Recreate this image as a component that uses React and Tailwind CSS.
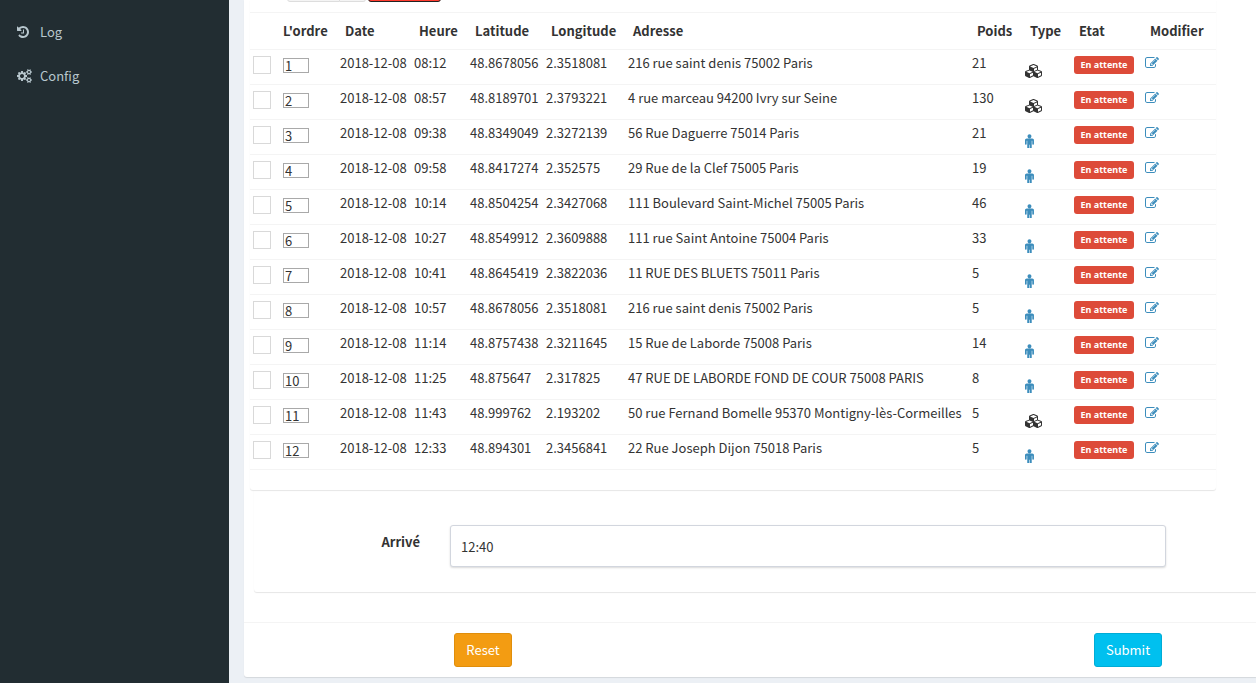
const ICONS = {
  history: {
    box: '128 0 1536 1792',
    d: 'M1664 896q0 156-61 298t-164 245-245 164-298 61q-172 0-327-72.5t-264-204.5q-7-10-6.5-22.5t8.5-20.5l137-138q10-9 25-9 16 2 23 12 73 95 179 147t225 52q104 0 198.5-40.5t163.5-109.5 109.5-163.5 40.5-198.5-40.5-198.5-109.5-163.5-163.5-109.5-198.5-40.5q-98 0-188 35.5t-160 101.5l137 138q31 30 14 69-17 40-59 40h-448q-26 0-45-19t-19-45v-448q0-42 40-59 39-17 69 14l130 129q107-101 244.5-156.5t284.5-55.5q156 0 298 61t245 164 164 245 61 298zm-640-288v448q0 14-9 23t-23 9h-320q-14 0-23-9t-9-23v-64q0-14 9-23t23-9h224v-352q0-14 9-23t23-9h64q14 0 23 9t9 23z',
  },
  cogs: {
    box: '0 0 1920 1792',
    d: 'M896 896q0-106-75-181t-181-75-181 75-75 181 75 181 181 75 181-75 75-181zm768 512q0-52-38-90t-90-38-90 38-38 90q0 53 37.5 90.5t90.5 37.5 90.5-37.5 37.5-90.5zm0-1024q0-52-38-90t-90-38-90 38-38 90q0 53 37.5 90.5t90.5 37.5 90.5-37.5 37.5-90.5zm-384 421v185q0 10-7 19.5t-16 10.5l-155 24q-11 35-32 76 34 48 90 115 7 11 7 20 0 12-7 19-23 30-82.5 89.5t-78.5 59.5q-11 0-21-7l-115-90q-37 19-77 31-11 108-23 155-7 24-30 24h-186q-11 0-20-7.5t-10-17.5l-23-153q-34-10-75-31l-118 89q-7 7-20 7-11 0-21-8-144-133-144-160 0-9 7-19 10-14 41-53t47-61q-23-44-35-82l-152-24q-10-1-17-9.5t-7-19.5v-185q0-10 7-19.5t16-10.5l155-24q11-35 32-76-34-48-90-115-7-11-7-20 0-12 7-20 22-30 82-89t79-59q11 0 21 7l115 90q34-18 77-32 11-108 23-154 7-24 30-24h186q11 0 20 7.5t10 17.5l23 153q34 10 75 31l118-89q8-7 20-7 11 0 21 8 144 133 144 160 0 8-7 19-12 16-42 54t-45 60q23 48 34 82l152 23q10 2 17 10.5t7 19.5zm640 533v140q0 16-149 31-12 27-30 52 51 113 51 138 0 4-4 7-122 71-124 71-8 0-46-47t-52-68q-20 2-30 2t-30-2q-14 21-52 68t-46 47q-2 0-124-71-4-3-4-7 0-25 51-138-18-25-30-52-149-15-149-31v-140q0-16 149-31 13-29 30-52-51-113-51-138 0-4 4-7 4-2 35-20t59-34 30-16q8 0 46 46.5t52 67.5q20-2 30-2t30 2q51-71 92-112l6-2q4 0 124 70 4 3 4 7 0 25-51 138 17 23 30 52 149 15 149 31zm0-1024v140q0 16-149 31-12 27-30 52 51 113 51 138 0 4-4 7-122 71-124 71-8 0-46-47t-52-68q-20 2-30 2t-30-2q-14 21-52 68t-46 47q-2 0-124-71-4-3-4-7 0-25 51-138-18-25-30-52-149-15-149-31v-140q0-16 149-31 13-29 30-52-51-113-51-138 0-4 4-7 4-2 35-20t59-34 30-16q8 0 46 46.5t52 67.5q20-2 30-2t30 2q51-71 92-112l6-2q4 0 124 70 4 3 4 7 0 25-51 138 17 23 30 52 149 15 149 31z',
  },
  cubes: {
    box: '0 0 2304 1792',
    d: 'M640 1632l384-192v-314l-384 164v342zm-64-454l404-173-404-173-404 173zm1088 454l384-192v-314l-384 164v342zm-64-454l404-173-404-173-404 173zm-448-293l384-165v-266l-384 164v267zm-64-379l441-189-441-189-441 189zm1088 518v416q0 36-19 67t-52 47l-448 224q-25 14-57 14t-57-14l-448-224q-4-2-7-4-2 2-7 4l-448 224q-25 14-57 14t-57-14l-448-224q-33-16-52-47t-19-67v-416q0-38 21.5-70t56.5-48l434-186v-400q0-38 21.5-70t56.5-48l448-192q23-10 50-10t50 10l448 192q35 16 56.5 48t21.5 70v400l434 186q36 16 57 48t21 70z',
  },
  male: {
    box: '0 128 1024 1600',
    d: 'M1024 832v416q0 40-28 68t-68 28-68-28-28-68v-352h-64v912q0 46-33 79t-79 33-79-33-33-79v-464h-64v464q0 46-33 79t-79 33-79-33-33-79v-912h-64v352q0 40-28 68t-68 28-68-28-28-68v-416q0-80 56-136t136-56h640q80 0 136 56t56 136zm-288-448q0 93-65.5 158.5t-158.5 65.5-158.5-65.5-65.5-158.5 65.5-158.5 158.5-65.5 158.5 65.5 65.5 158.5z',
  },
  edit: {
    box: '0 0 1792 1792',
    d: 'M888 1184l116-116-152-152-116 116v56h96v96h56zm440-720q-16-16-33 1l-350 350q-17 17-1 33t33-1l350-350q17-17 1-33zm80 594v190q0 119-84.5 203.5t-203.5 84.5h-832q-119 0-203.5-84.5t-84.5-203.5v-832q0-119 84.5-203.5t203.5-84.5h832q63 0 117 25 15 7 18 23 3 17-9 29l-49 49q-14 14-32 8-23-6-45-6h-832q-66 0-113 47t-47 113v832q0 66 47 113t113 47h832q66 0 113-47t47-113v-126q0-13 9-22l64-64q15-15 35-7t20 29zm-96-738l288 288-672 672h-288v-288zm444 132l-92 92-288-288 92-92q28-28 68-28t68 28l152 152q28 28 28 68t-28 68z',
  },
};

function Icon({ name, className }) {
  return (
    <svg viewBox={ICONS[name].box} preserveAspectRatio="xMinYMid meet" fill="currentColor" aria-hidden="true" className={className}>
      <path d={ICONS[name].d} />
    </svg>
  );
}

const STOPS = [
  ['08:12', '48.8678056', '2.3518081', '216 rue saint denis 75002 Paris', 21, 'cubes'],
  ['08:57', '48.8189701', '2.3793221', '4 rue marceau 94200 Ivry sur Seine', 130, 'cubes'],
  ['09:38', '48.8349049', '2.3272139', '56 Rue Daguerre 75014 Paris', 21, 'male'],
  ['09:58', '48.8417274', '2.352575', '29 Rue de la Clef 75005 Paris', 19, 'male'],
  ['10:14', '48.8504254', '2.3427068', '111 Boulevard Saint-Michel 75005 Paris', 46, 'male'],
  ['10:27', '48.8549912', '2.3609888', '111 rue Saint Antoine 75004 Paris', 33, 'male'],
  ['10:41', '48.8645419', '2.3822036', '11 RUE DES BLUETS 75011 Paris', 5, 'male'],
  ['10:57', '48.8678056', '2.3518081', '216 rue saint denis 75002 Paris', 5, 'male'],
  ['11:14', '48.8757438', '2.3211645', '15 Rue de Laborde 75008 Paris', 14, 'male'],
  ['11:25', '48.875647', '2.317825', '47 RUE DE LABORDE FOND DE COUR 75008 PARIS', 8, 'male'],
  ['11:43', '48.999762', '2.193202', '50 rue Fernand Bomelle 95370 Montigny-lès-Cormeilles', 5, 'cubes'],
  ['12:33', '48.894301', '2.3456841', '22 Rue Joseph Dijon 75018 Paris', 5, 'male'],
];

const HEADERS = ["L'ordre", 'Date', 'Heure', 'Latitude', 'Longitude', 'Adresse', 'Poids', 'Type', 'Etat', 'Modifier'];

function SideLink({ icon, children }) {
  return (
    <a href="#" className="flex h-11 items-center gap-2 pl-[17px] text-[#b8c7ce]">
      <Icon name={icon} className="h-[14px] w-[15px]" />
      {children}
    </a>
  );
}

function StopRow({ order, stop }) {
  const [hour, lat, lng, address, weight, type] = stop;
  return (
    <tr className="h-[35px] border-b border-[#f4f4f4] align-top">
      <td className="pl-[3px] pt-[6px]">
        <input type="checkbox" aria-label={`Choisir ${order}`} className="block size-[18px] appearance-none border border-[#d9d9d9] bg-white" />
      </td>
      <td className="pl-[10px] pt-2">
        <input type="text" aria-label={`Ordre ${order}`} defaultValue={order} className="block h-[15px] w-[26px] border border-[#a9a9a9] bg-white pl-px leading-4" />
      </td>
      <td className="px-[5px] pt-[3px]">2018-12-08</td>
      <td className="px-[5px] pt-[3px]">{hour}</td>
      <td className="px-[5px] pt-[3px]">{lat}</td>
      <td className="px-[5px] pt-[3px]">{lng}</td>
      <td className="px-[5px] pt-[3px]">{address}</td>
      <td className="px-[5px] pt-[3px]">{weight}</td>
      <td className="px-[5px] pt-[14px]">
        <Icon name={type} className={type === 'cubes' ? 'h-[14px] w-[18px]' : 'h-[14px] w-[9px] text-[#3c8dbc]'} />
      </td>
      <td className="px-[5px] pt-[6px]">
        <span className="block h-[18px] w-[60px] rounded-[3px] bg-[#dd4b39] text-center font-['Noto_Sans',sans-serif] text-[9px] leading-[18px] font-bold text-white">En attente</span>
      </td>
      <td className="px-[5px] pt-[6px]">
        <a href="#" aria-label={`Modifier ${order}`} className="block w-[14px] text-[#3c8dbc]">
          <Icon name="edit" className="size-[14px]" />
        </a>
      </td>
    </tr>
  );
}

export default function App() {
  return (
    <div className="flex min-h-screen overflow-x-hidden bg-[#ecf0f5] font-['Noto_Sans_CJK_SC','Noto_Sans',sans-serif] text-[13px] leading-5 text-[#333]">
      <aside className="w-[229px] shrink-0 bg-[#222d32] pt-[10px]">
        <nav>
          <SideLink icon="history">Log</SideLink>
          <SideLink icon="cogs">Config</SideLink>
        </nav>
      </aside>
      <main className="min-w-0 flex-1 pb-[6px] pl-[15px]">
        <form className="rounded-bl-[3px] bg-white shadow-[0_1px_1px_rgba(0,0,0,0.1)]" onSubmit={(e) => e.preventDefault()}>
          <section className="mr-10 ml-[6px] rounded-b-[3px] pb-5 shadow-[0_1px_1px_rgba(0,0,0,0.1)]">
            <div className="flex h-3 items-end overflow-hidden pb-[10px] pl-[37px]">
              <button type="button" aria-label="Tout choisir" className="h-8 w-[53px] shrink-0 rounded-l-[3px] border border-[#ddd] bg-[#f4f4f4]" />
              <button type="button" aria-label="Actualiser" className="h-8 w-[26px] shrink-0 rounded-r-[3px] border border-l-0 border-[#ddd] bg-[#f4f4f4]" />
              <button type="button" aria-label="Supprimer" className="ml-[2px] h-8 w-[73px] shrink-0 rounded-[3px] border border-[#222] bg-[#ff3b2f]" />
            </div>
            <table className="w-full table-fixed border-collapse text-left whitespace-nowrap">
              <colgroup>
                <col className="w-[23px]" />
                <col className="w-[62px]" />
                <col className="w-[74px]" />
                <col className="w-[56px]" />
                <col className="w-[76px]" />
                <col className="w-[82px]" />
                <col />
                <col className="w-[53px]" />
                <col className="w-[49px]" />
                <col className="w-[71px]" />
                <col className="w-[76px]" />
              </colgroup>
              <thead>
                <tr className="h-[37px] border-y border-[#f4f4f4]">
                  <td />
                  {HEADERS.map((h) => (
                    <th key={h} scope="col" className="pl-[10px] font-bold">{h}</th>
                  ))}
                </tr>
              </thead>
              <tbody>
                {STOPS.map((stop, i) => (
                  <StopRow key={i} order={i + 1} stop={stop} />
                ))}
              </tbody>
            </table>
          </section>
          <section className="ml-[10px] flex rounded-bl-[3px] pt-[35px] pr-[90px] pb-[25px] shadow-[0_1px_1px_rgba(0,0,0,0.1)]">
            <label htmlFor="arrive" className="w-[196px] shrink-0 pt-[7px] pr-[30px] text-right font-bold">Arrivé</label>
            <input id="arrive" type="text" defaultValue="12:40" className="h-[42px] min-w-0 flex-1 rounded-[3px] border border-[#d2d6de] bg-white px-[10px] shadow-[0_1px_2px_rgba(0,0,0,0.15)]" />
          </section>
          <footer className="mt-[30px] flex justify-between border-t border-[#f4f4f4] py-[10px] pr-[94px] pl-[210px]">
            <button type="reset" className="h-[34px] w-[58px] rounded-[3px] border border-[#e08e0b] bg-[#f39c12] text-white">Reset</button>
            <button type="submit" className="h-[34px] w-[68px] rounded-[3px] border border-[#00acd6] bg-[#00c0ef] text-white">Submit</button>
          </footer>
        </form>
      </main>
    </div>
  );
}
